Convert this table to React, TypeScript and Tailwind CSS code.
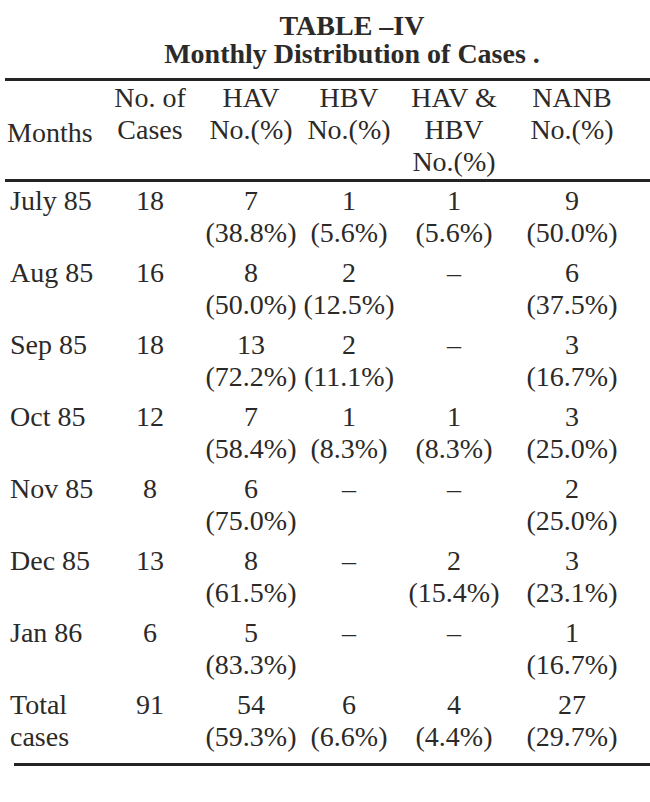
import React from 'react';

type Cell = string | string[];

interface Row {
  month: string[];
  cases: string;
  hav: Cell;
  hbv: Cell;
  both: Cell;
  nanb: Cell;
}

const ROWS: Row[] = [
  { month: ['July 85'], cases: '18', hav: ['7', '(38.8%)'], hbv: ['1', '(5.6%)'], both: ['1', '(5.6%)'], nanb: ['9', '(50.0%)'] },
  { month: ['Aug 85'], cases: '16', hav: ['8', '(50.0%)'], hbv: ['2', '(12.5%)'], both: '–', nanb: ['6', '(37.5%)'] },
  { month: ['Sep 85'], cases: '18', hav: ['13', '(72.2%)'], hbv: ['2', '(11.1%)'], both: '–', nanb: ['3', '(16.7%)'] },
  { month: ['Oct 85'], cases: '12', hav: ['7', '(58.4%)'], hbv: ['1', '(8.3%)'], both: ['1', '(8.3%)'], nanb: ['3', '(25.0%)'] },
  { month: ['Nov 85'], cases: '8', hav: ['6', '(75.0%)'], hbv: '–', both: '–', nanb: ['2', '(25.0%)'] },
  { month: ['Dec 85'], cases: '13', hav: ['8', '(61.5%)'], hbv: '–', both: ['2', '(15.4%)'], nanb: ['3', '(23.1%)'] },
  { month: ['Jan 86'], cases: '6', hav: ['5', '(83.3%)'], hbv: '–', both: '–', nanb: ['1', '(16.7%)'] },
  { month: ['Total', 'cases'], cases: '91', hav: ['54', '(59.3%)'], hbv: ['6', '(6.6%)'], both: ['4', '(4.4%)'], nanb: ['27', '(29.7%)'] },
];

const COLS = 'grid grid-cols-[100px_100px_102px_94px_116px_120px]';

function Lines({ value, className = '' }: { value: Cell; className?: string }) {
  const lines = Array.isArray(value) ? value : [value];
  return (
    <div className={`flex flex-col ${className}`}>
      {lines.map((l, i) => (
        <span key={i} className="h-[32px] whitespace-nowrap">{l}</span>
      ))}
    </div>
  );
}

function Rule({ inset = 'ml-[5px]' }: { inset?: string }) {
  return <div className={`h-[3px] bg-[#262422] ${inset}`} />;
}

export default function App() {
  return (
    <div
      className="w-[650px] h-[802px] bg-white text-[#2c2a28] overflow-hidden"
      style={{ fontFamily: '"Liberation Serif", "Times New Roman", serif' }}
    >
      {/* Title */}
      <div className="pt-[12px] pl-[54px] text-center font-bold text-[28px] leading-[28px]">
        <div>TABLE –IV</div>
        <div>Monthly Distribution of Cases .</div>
      </div>

      <div className="mt-[10px]">
        <Rule />
      </div>

      {/* Header */}
      <div className={`${COLS} pt-[1px] text-[28px] leading-[32px]`}>
        <div className="pl-[7px] flex flex-col">
          <span className="h-[32px]" />
          <span className="h-[32px] pt-[3px]">Months</span>
        </div>
        <Lines value={['No. of', 'Cases']} className="items-center" />
        <Lines value={['HAV', 'No.(%)']} className="items-center" />
        <Lines value={['HBV', 'No.(%)']} className="items-center" />
        <Lines value={['HAV &', 'HBV', 'No.(%)']} className="items-center" />
        <Lines value={['NANB', 'No.(%)']} className="items-center" />
      </div>

      <div className="mt-[1px]">
        <Rule />
      </div>

      {/* Body */}
      <div className="pt-[3px] text-[28px] leading-[32px]">
        {ROWS.map((r, i) => (
          <div key={i} className={`${COLS} h-[72px]`}>
            <Lines value={r.month} className="pl-[10px]" />
            <Lines value={r.cases} className="items-center" />
            <Lines value={r.hav} className="items-center" />
            <Lines value={r.hbv} className="items-center" />
            <Lines value={r.both} className="items-center" />
            <Lines value={r.nanb} className="items-center" />
          </div>
        ))}
      </div>

      <div className="mt-[2px]">
        <Rule inset="ml-[14px]" />
      </div>
    </div>
  );
}
